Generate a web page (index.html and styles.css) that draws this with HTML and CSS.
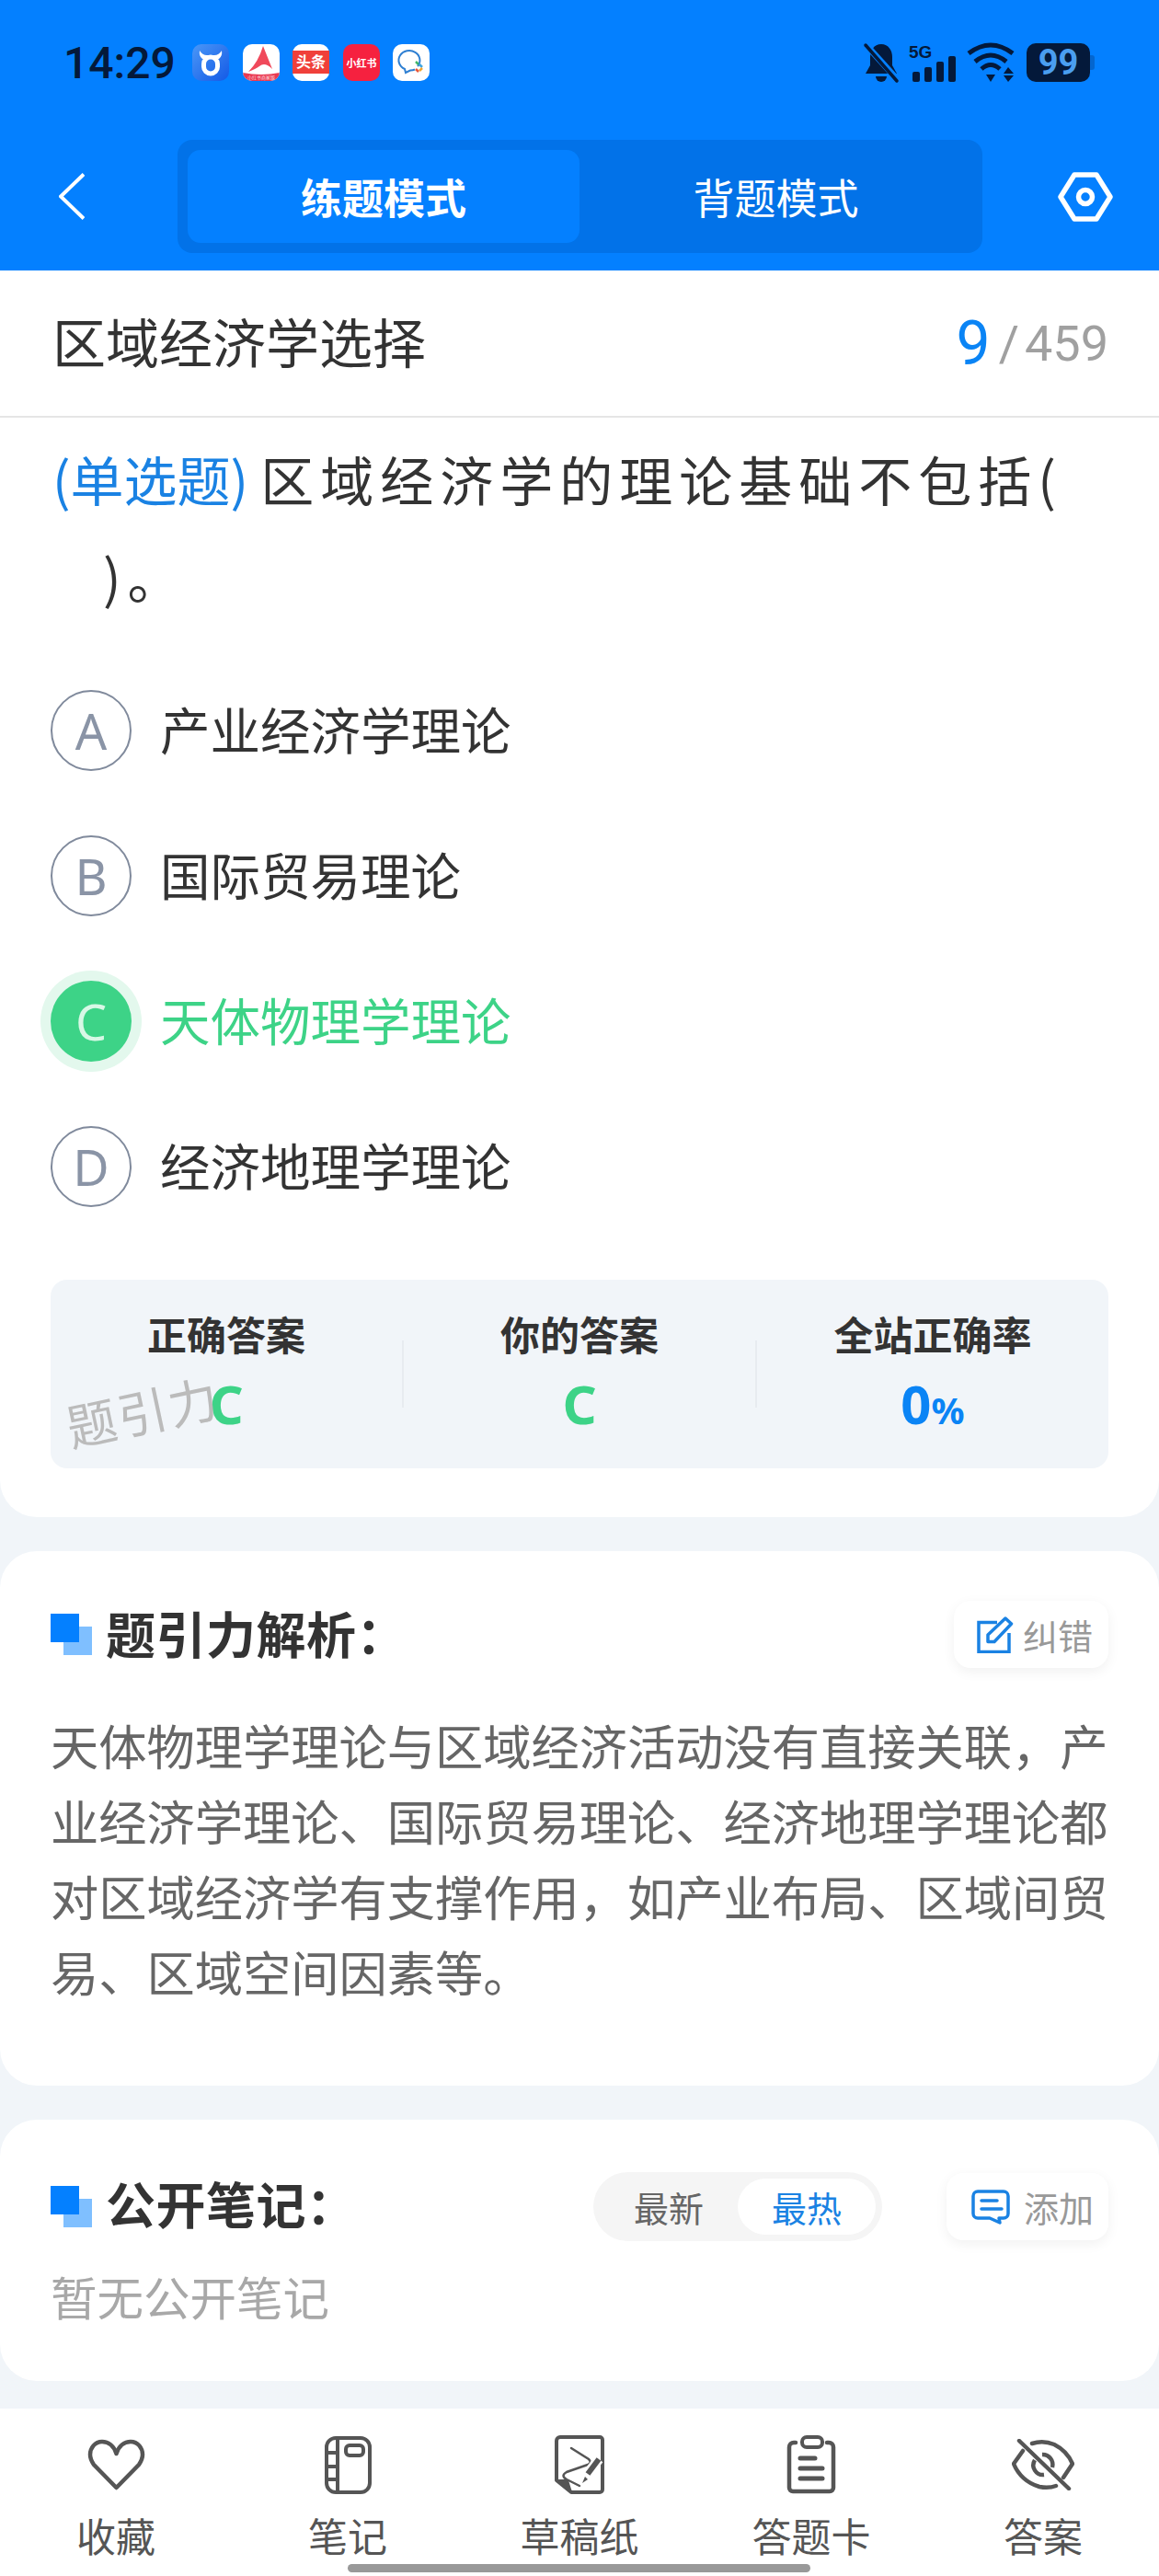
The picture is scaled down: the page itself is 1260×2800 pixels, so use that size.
FILE: index.html
```html
<!DOCTYPE html>
<html lang="zh-CN">
<head>
<meta charset="utf-8">
<title>区域经济学选择</title>
<link rel="stylesheet" href="styles.css">
</head>
<body>
<div class="app">
  <header class="topbar">
    <div class="status">
      <span class="clock">14:29</span>
      <div class="apps">
        <svg class="app-icon" width="40" height="40" viewBox="0 0 40 40">
          <defs><linearGradient id="cowbg" x1="0" y1="0" x2="1" y2="1"><stop offset="0" stop-color="#4a97f7"/><stop offset="1" stop-color="#145ae6"/></linearGradient></defs>
          <rect width="40" height="40" rx="10" fill="url(#cowbg)"/>
          <rect x="12.500" y="14" width="15" height="18" rx="7.500" fill="none" stroke="#fff" stroke-width="5"/>
          <path d="M11 16 Q7 13 8 7 Q11 12 16 12 H24 Q29 12 32 7 Q33 13 29 16Z" fill="#fff"/>
        </svg>
        <svg class="app-icon" width="40" height="40" viewBox="0 0 40 40">
          <rect width="40" height="40" rx="10" fill="#fff"/>
          <path d="M0 31 Q20 35 40 31 V30 A10 10 0 0 1 30 40 H10 A10 10 0 0 1 0 30Z" fill="#e93a52"/>
          <path d="M22 2 L32 27 Q24 19 18 24 Q14 27 6 30 Q17 19 22 2Z" fill="#f0495b"/>
          <text class="tiny" x="20" y="38" text-anchor="middle">小红书商家版</text>
        </svg>
        <svg class="app-icon" width="40" height="40" viewBox="0 0 40 40">
          <rect width="40" height="40" rx="10" fill="#fff"/>
          <rect y="7" width="40" height="25" fill="#f0403a"/>
          <text class="app-mark toutiao" x="20" y="25" text-anchor="middle">头条</text>
        </svg>
        <svg class="app-icon" width="40" height="40" viewBox="0 0 40 40">
          <rect width="40" height="40" rx="10" fill="#f6213f"/>
          <text class="app-mark redbook" x="20" y="24.500" text-anchor="middle">小红书</text>
        </svg>
        <svg class="app-icon" width="40" height="40" viewBox="0 0 40 40">
          <rect width="40" height="40" rx="10" fill="#fff"/>
          <path d="M27 24 A11.500 10.500 0 1 0 13 27 L14 31 L19 28.500 Q22 28.500 24 27.500" fill="none" stroke="#2e7fd2" stroke-width="2"/>
          <path d="M25 19 L28 22" stroke="#3fb56b" stroke-width="2.500"/>
          <path d="M29 22 L32 25" stroke="#3fa5e0" stroke-width="2.500"/>
          <path d="M32 26 L29 29" stroke="#f2a531" stroke-width="2.500"/>
          <path d="M28 30 L25 27" stroke="#e8583c" stroke-width="2.500"/>
        </svg>
      </div>
      <div class="sys">
        <svg width="38" height="43" viewBox="0 0 38 43">
          <path d="M19 1 C11 1 7 8 7 15 V24 L2 33 H36 L31 24 V15 C31 8 27 1 19 1Z" fill="#04193a"/>
          <path d="M13 36 H25 A6 6 0 0 1 13 36Z" fill="#04193a"/>
          <path d="M0 -1 L38 41" stroke="#0480ff" stroke-width="7"/>
          <path d="M2 2 L36 41" stroke="#04193a" stroke-width="3.500" stroke-linecap="round"/>
        </svg>
        <svg width="50" height="43" viewBox="0 0 50 43">
          <text class="net" x="-1" y="16">5G</text>
          <rect x="3" y="31" width="8" height="11" rx="2" fill="#04193a"/>
          <rect x="16" y="26" width="8" height="16" rx="2" fill="#04193a"/>
          <rect x="29" y="20" width="8" height="22" rx="2" fill="#04193a"/>
          <rect x="42" y="14" width="8" height="28" rx="2" fill="#04193a"/>
        </svg>
        <svg width="53" height="43" viewBox="0 0 53 43">
          <path d="M2 11 Q26 -7 50 11" fill="none" stroke="#04193a" stroke-width="5"/>
          <path d="M9 20 Q26 6 43 20" fill="none" stroke="#04193a" stroke-width="5"/>
          <path d="M16 28 Q26 19 36 28" fill="none" stroke="#04193a" stroke-width="5"/>
          <path d="M21 34 H31 L26 42Z" fill="#04193a"/>
          <path d="M45 26 L51 33 H40Z M40 35 H51 L45 42Z" fill="#04193a"/>
        </svg>
        <div class="battery"><span class="charge">99</span><i class="nub"></i></div>
      </div>
    </div>
    <nav class="modebar">
      <svg class="back" width="28" height="51" viewBox="0 0 28 51">
        <path d="M27 1.500 L2 25.500 L27 49.500" fill="none" stroke="#fff" stroke-width="4"/>
      </svg>
      <div class="segment">
        <span class="segment-item is-active">练题模式</span>
        <span class="segment-item">背题模式</span>
      </div>
      <svg class="settings" width="60" height="54" viewBox="0 0 60 54">
        <path d="M18 3 H42 L57 27 L42 51 H18 L3 27Z" fill="none" stroke="#fff" stroke-width="5.500" stroke-linejoin="round"/>
        <circle cx="30" cy="27" r="7.500" fill="none" stroke="#fff" stroke-width="5.500"/>
      </svg>
    </nav>
  </header>

  <section class="card question-card">
    <div class="paper-title">
      <span class="paper-name">区域经济学选择</span>
      <span class="counter"><b class="counter-now">9</b><span class="counter-slash">/</span><span class="counter-all">459</span></span>
    </div>
    <p class="stem"><span class="stem-type">(单选题)</span> <span class="stem-text">区域经济学的理论基础不包括(<br><span class="stem-blank"></span>)。</span></p>
    <ul class="options">
      <li class="option"><span class="option-key">A</span><span class="option-text">产业经济学理论</span></li>
      <li class="option"><span class="option-key">B</span><span class="option-text">国际贸易理论</span></li>
      <li class="option is-right"><span class="option-key">C</span><span class="option-text">天体物理学理论</span></li>
      <li class="option"><span class="option-key">D</span><span class="option-text">经济地理学理论</span></li>
    </ul>
    <div class="result">
      <div class="result-cell">
        <span class="result-label">正确答案</span>
        <span class="result-value green">C</span>
        <span class="watermark">题引力</span>
      </div>
      <i class="result-rule"></i>
      <div class="result-cell">
        <span class="result-label">你的答案</span>
        <span class="result-value green">C</span>
      </div>
      <i class="result-rule"></i>
      <div class="result-cell">
        <span class="result-label">全站正确率</span>
        <span class="result-value blue">0<small class="pct">%</small></span>
      </div>
    </div>
  </section>

  <section class="card analysis-card">
    <div class="card-head">
      <h2 class="card-title"><i class="title-mark"></i>题引力解析：</h2>
      <button class="chip">
        <svg width="40" height="40" viewBox="0 0 40 40">
          <path d="M22 6.500 H2 V38.500 H35 V18" fill="none" stroke="#1a82e3" stroke-width="3.500"/>
          <path d="M12 27.500 V20 L31 2 L37.500 8 L19 27.500Z" fill="none" stroke="#1a82e3" stroke-width="3.500" stroke-linejoin="round"/>
        </svg>
        <span>纠错</span>
      </button>
    </div>
    <p class="analysis-text">天体物理学理论与区域经济活动没有直接关联，产业经济学理论、国际贸易理论、经济地理学理论都对区域经济学有支撑作用，如产业布局、区域间贸易、区域空间因素等。</p>
  </section>

  <section class="card notes-card">
    <div class="card-head">
      <h2 class="card-title"><i class="title-mark"></i>公开笔记：</h2>
      <div class="sorter">
        <span class="sorter-item">最新</span>
        <span class="sorter-item is-active">最热</span>
      </div>
      <button class="chip chip-add">
        <svg width="42" height="38" viewBox="0 0 42 38">
          <path d="M7 2 H35 A5 5 0 0 1 40 7 V26 A5 5 0 0 1 35 31 H30 L31 36 L20 31 H7 A5 5 0 0 1 2 26 V7 A5 5 0 0 1 7 2Z" fill="none" stroke="#1a82e3" stroke-width="3.500" stroke-linejoin="round"/>
          <path d="M11 12 H28 M11 21 H33" stroke="#1a82e3" stroke-width="3.500" stroke-linecap="round"/>
        </svg>
        <span>添加</span>
      </button>
    </div>
    <p class="notes-empty">暂无公开笔记</p>
  </section>

  <footer class="tabbar">
    <div class="tab">
      <svg width="63" height="56" viewBox="0 0 63 56">
        <path d="M31.500 16 C29 8 23 3 16 3 C8 3 3 10 3 17 C3 21 5 25 7 28 L31.500 53 L56 28 C58 25 60 21 60 17 C60 10 55 3 47 3 C40 3 34 8 31.500 16Z" fill="none" stroke="#555" stroke-width="4.500" stroke-linejoin="round"/>
      </svg>
      <span class="tab-label">收藏</span>
    </div>
    <div class="tab">
      <svg width="51" height="63" viewBox="0 0 51 63">
        <rect x="2" y="2" width="47" height="59" rx="10" fill="none" stroke="#555" stroke-width="4"/>
        <path d="M14 2 V61 M2 18 H14 M2 33 H14 M2 47 H14" stroke="#555" stroke-width="4"/>
        <rect x="23" y="10" width="19" height="11" rx="4" fill="none" stroke="#555" stroke-width="4"/>
      </svg>
      <span class="tab-label">笔记</span>
    </div>
    <div class="tab">
      <svg width="54" height="64" viewBox="0 0 54 64">
        <path d="M6 2 H49 A3 3 0 0 1 52 5 V59 A3 3 0 0 1 49 62 H18 L2 49 V6 A4 4 0 0 1 6 2Z" fill="none" stroke="#555" stroke-width="4" stroke-linejoin="round"/>
        <path d="M2 49 H14 L18 62Z" fill="#555" stroke="#555" stroke-width="2" stroke-linejoin="round"/>
        <path d="M18 14 L37 26 Q41 30 36 32 L13 40 Q6 44 13 48 L27 55" fill="none" stroke="#555" stroke-width="2.500" stroke-linecap="round"/>
        <path d="M48 26 L35 43" stroke="#fff" stroke-width="11"/>
        <path d="M48 26 L36 42" stroke="#555" stroke-width="6"/>
        <path d="M33 45 L30 52 L36 48Z" fill="#555"/>
      </svg>
      <span class="tab-label">草稿纸</span>
    </div>
    <div class="tab">
      <svg width="54" height="64" viewBox="0 0 54 64">
        <path d="M10 8 H8 A5 5 0 0 0 3 13 V57 A4 4 0 0 0 7 61 H47 A4 4 0 0 0 51 57 V13 A5 5 0 0 0 46 8 H44" fill="none" stroke="#555" stroke-width="4.500" stroke-linecap="round"/>
        <rect x="17" y="2" width="22" height="11" rx="5" fill="none" stroke="#555" stroke-width="4"/>
        <path d="M15 25 H31 M15 36 H39 M15 47 H39" stroke="#555" stroke-width="5" stroke-linecap="round"/>
      </svg>
      <span class="tab-label">答题卡</span>
    </div>
    <div class="tab">
      <svg width="68" height="56" viewBox="0 0 68 56">
        <path d="M8 2 L62 54" stroke="#555" stroke-width="4.500" stroke-linecap="round"/>
        <path d="M12 13 L2 27 Q10 46 30 52 Q40 54 48 51" fill="none" stroke="#555" stroke-width="4.500" stroke-linecap="round" stroke-linejoin="round"/>
        <path d="M22 5 Q34 1 46 6 Q60 13 66 27 L56 42" fill="none" stroke="#555" stroke-width="4.500" stroke-linecap="round" stroke-linejoin="round"/>
        <path d="M25 23 A10.500 10.500 0 0 0 35 39" fill="none" stroke="#555" stroke-width="4.500"/>
        <path d="M33 17 A11 11 0 0 1 44 31" fill="none" stroke="#555" stroke-width="4.500"/>
      </svg>
      <span class="tab-label">答案</span>
    </div>
    <i class="home-bar"></i>
  </footer>
</div>
</body>
</html>
```

FILE: styles.css
```css
* {
  box-sizing: border-box;
}

html,
body {
  margin: 0;
  padding: 0;
}

body {
  background: #f1f5f9;
  font-family: "Noto Sans CJK SC", "Noto Sans", sans-serif;
  color: #333;
}

.app {
  width: 1260px;
  height: 2800px;
  overflow: hidden;
  display: flex;
  flex-direction: column;
}

/* top bar */
.topbar {
  height: 294px;
  background: #0480ff;
  flex: none;
}

.status {
  height: 152px;
  padding: 47px 75px 0 69px;
  display: flex;
  align-items: flex-start;
}

.clock {
  flex: none;
  font-family: Roboto, sans-serif;
  font-weight: 500;
  font-size: 48px;
  line-height: 43px;
  width: 140px;
  color: #04193a;
}

.apps {
  flex: none;
  display: flex;
  gap: 14.500px;
  padding-top: 1px;
}

.app-icon {
  display: block;
  flex: none;
}

.tiny {
  font-size: 5px;
  fill: #ffd9de;
}

.app-mark {
  fill: #fff;
  font-weight: 700;
}

.toutiao {
  font-size: 16px;
}

.redbook {
  font-size: 11px;
}

.sys {
  margin-left: auto;
  display: flex;
  align-items: flex-start;
  gap: 12px;
}

.sys svg {
  display: block;
  overflow: visible;
  flex: none;
}

.net {
  font-family: "Liberation Sans", sans-serif;
  font-size: 19px;
  font-weight: 700;
  fill: #04193a;
}

.battery {
  position: relative;
  flex: none;
  width: 69px;
  height: 42px;
  border-radius: 10px;
  background: #04193a;
  display: flex;
  align-items: center;
  justify-content: center;
}

.charge {
  font-family: Roboto, sans-serif;
  font-weight: 700;
  font-size: 38px;
  line-height: 42px;
  color: #4a9ef0;
}

.nub {
  position: absolute;
  right: -5px;
  top: 13px;
  width: 5px;
  height: 16px;
  border-radius: 0 3px 3px 0;
  background: #0466cf;
}

.modebar {
  height: 123px;
  padding: 0 50px 0 64px;
  display: flex;
  align-items: center;
}

.settings,
.back {
  display: block;
  flex: none;
}

.segment {
  margin-left: 101px;
  width: 875px;
  height: 123px;
  padding: 11px;
  border-radius: 16px;
  background: #0272e8;
  display: grid;
  grid-template-columns: 426px 1fr;
}

.segment-item {
  display: flex;
  align-items: center;
  justify-content: center;
  border-radius: 14px;
  font-size: 45px;
  color: #fff;
}

.segment-item.is-active {
  background: #0480ff;
  font-weight: 700;
}

.settings {
  margin-left: auto;
}

/* cards */
.card {
  background: #fff;
  border-radius: 40px;
  flex: none;
}

.question-card {
  height: 1355px;
  border-radius: 0 0 40px 40px;
}

.paper-title {
  height: 160px;
  padding: 0 55px 0 57px;
  border-bottom: 2px solid #e5e5e5;
  display: flex;
  align-items: center;
  justify-content: space-between;
}

.paper-name {
  font-size: 58px;
  line-height: 80px;
  margin-bottom: 6px;
  color: #333;
}

.counter {
  display: flex;
  align-items: center;
  font-family: Roboto, sans-serif;
  color: #a0a0a0;
  font-size: 54px;
}

.counter-now {
  font-weight: 400;
  font-size: 66px;
  color: #0a84f5;
}

.counter-slash {
  margin: 0 6px 0 9px;
}

.stem {
  margin: 13px 0 0;
  padding: 0 57px;
  font-size: 58px;
  line-height: 106px;
  height: 220px;
  color: #333;
}

.stem-type {
  color: #1a82e3;
}

.stem-text {
  letter-spacing: 7px;
}

.stem-blank {
  display: inline-block;
  width: 55px;
}

.options {
  list-style: none;
  margin: 28px 0 0;
  padding: 0 0 0 55px;
}

.option {
  height: 158px;
  display: flex;
  align-items: center;
  gap: 31px;
  font-size: 54.500px;
  color: #333;
}

.option-text {
  margin-bottom: 6px;
}

.option-key {
  width: 88px;
  height: 88px;
  flex: none;
  border: 2px solid #808a9c;
  border-radius: 50%;
  display: flex;
  align-items: center;
  justify-content: center;
  font-family: "Noto Sans", sans-serif;
  font-weight: 400;
  font-size: 54px;
  color: #8a94a6;
}

.option.is-right {
  color: #3dd387;
}

.option.is-right .option-key {
  background: #3dd387;
  border: 0;
  box-shadow: 0 0 0 11px #e3f8ed;
  color: #d8f8e6;
}

.result {
  margin: 44px 55px 0;
  height: 205px;
  border-radius: 18px;
  background: #f1f5f9;
  display: grid;
  grid-template-columns: 1fr 2px 1fr 2px 1fr;
  align-items: center;
}

.result-cell {
  position: relative;
  display: flex;
  flex-direction: column;
  align-items: center;
}

.result-label {
  font-size: 43px;
  font-weight: 700;
  line-height: 60px;
  color: #333;
}

.result-value {
  font-family: "Noto Sans", sans-serif;
  font-weight: 700;
  font-size: 58px;
  line-height: 86px;
  margin-top: 4px;
}

.green {
  color: #3dd387;
}

.blue {
  color: #0a84f5;
}

.pct {
  font-size: 40px;
  line-height: 0;
}

.result-rule {
  height: 73px;
  background: #e7ebf0;
}

.watermark {
  position: absolute;
  left: 16px;
  top: 84px;
  font-size: 54px;
  line-height: 60px;
  letter-spacing: 2px;
  color: #bbb;
  transform: rotate(-12deg);
}

.card-head {
  display: flex;
  align-items: center;
}

.card-title {
  margin: 0;
  padding-bottom: 4px;
  display: flex;
  align-items: center;
  font-size: 54px;
  font-weight: 700;
  line-height: 69px;
  letter-spacing: 0.500px;
  color: #333;
}

.title-mark {
  position: relative;
  top: 2px;
  width: 45px;
  height: 45px;
  margin-right: 15px;
  flex: none;
  background: linear-gradient(#7fbfff, #7fbfff) 14px 14px / 31px 31px no-repeat;
}

.title-mark::before {
  content: "";
  position: absolute;
  left: 0;
  top: 0;
  width: 31px;
  height: 31px;
  background: #0480ff;
}

.chip {
  flex: none;
  margin-left: auto;
  height: 73px;
  border: 0;
  border-radius: 18px;
  background: #fff;
  box-shadow: 0 4px 14px rgba(0, 0, 0, 0.06);
  display: flex;
  align-items: center;
  padding: 0 17px 0 25px;
  gap: 10px;
  font-family: inherit;
  font-size: 38px;
  white-space: nowrap;
  color: #999;
}

.chip svg {
  display: block;
  flex: none;
}

.analysis-card {
  margin-top: 37px;
  height: 581px;
  padding: 54px 55px 0;
}

.analysis-text {
  margin: 42px 0 0;
  font-size: 52.250px;
  line-height: 82px;
  color: #666;
}

.notes-card {
  margin-top: 37px;
  height: 284px;
  padding: 56px 55px 0;
}

.notes-card .card-title {
  padding-bottom: 8px;
}

.notes-card .title-mark {
  top: 4px;
}

.sorter {
  flex: none;
  margin-left: auto;
  width: 314px;
  height: 75px;
  padding: 7px;
  border-radius: 38px;
  background: #f5f5f5;
  display: grid;
  grid-template-columns: 1fr 150px;
}

.sorter-item {
  display: flex;
  align-items: center;
  justify-content: center;
  border-radius: 31px;
  font-size: 38px;
  color: #666;
}

.sorter-item.is-active {
  background: #fff;
  color: #1a82e3;
}

.chip-add {
  margin-left: 70px;
  width: 176px;
  padding: 0 16px 0 27px;
  gap: 15px;
}

.notes-empty {
  margin: 23px 0 0;
  font-size: 50.500px;
  line-height: 70px;
  color: #a8a8a8;
}

/* bottom tabs */
.tabbar {
  position: relative;
  margin-top: 30px;
  flex: 1;
  background: #fff;
  display: grid;
  grid-template-columns: repeat(5, 1fr);
}

.tab {
  padding-top: 28px;
  display: grid;
  grid-template-rows: 66px 50px;
  row-gap: 18px;
  justify-items: center;
  align-items: center;
}

.tab svg {
  display: block;
}

.tab-label {
  font-size: 43px;
  line-height: 50px;
  color: #555;
}

.home-bar {
  position: absolute;
  left: 378px;
  top: 169px;
  width: 503px;
  height: 9px;
  border-radius: 5px;
  background: #999;
}
```
